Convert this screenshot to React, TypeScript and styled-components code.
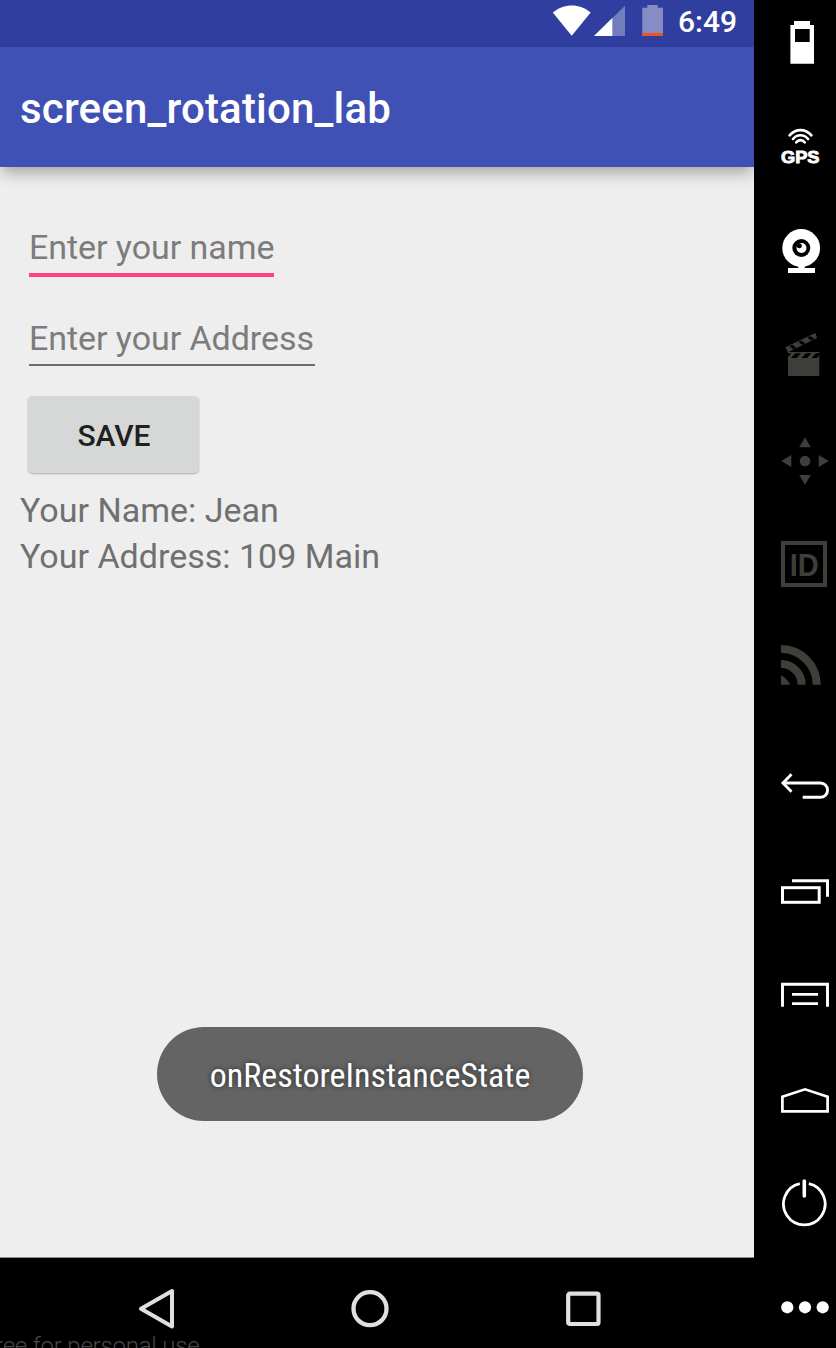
import React from "react";
import styled, { createGlobalStyle } from "styled-components";

const GlobalStyle = createGlobalStyle`
  * { box-sizing: border-box; }
  html, body { margin: 0; padding: 0; background: #000; }
  body { font-family: Roboto, "Liberation Sans", sans-serif; overflow: hidden; }
  svg { display: block; flex: none; }
`;

const Emulator = styled.div`
  display: flex;
  width: 836px;
  height: 1348px;
  background: #000;
  overflow: hidden;
`;

const Device = styled.main`
  position: relative;
  display: flex;
  flex-direction: column;
  width: 754px;
  height: 1348px;
  overflow: hidden;
`;

const StatusBar = styled.header`
  display: flex;
  align-items: flex-start;
  justify-content: flex-end;
  height: 47px;
  padding: 5px 17px 0 0;
  background: #303f9f;
  color: #fff;
`;

const Clock = styled.span`
  width: 59px;
  margin-left: 14px;
  font-size: 30px;
  line-height: 34px;
  font-weight: 500;
  white-space: nowrap;
`;

const AppBar = styled.div`
  position: relative;
  z-index: 1;
  display: flex;
  align-items: center;
  height: 120px;
  padding: 4px 0 0 20px;
  background: #3f51b5;
  box-shadow: 0 8px 14px -2px rgba(0, 0, 0, 0.31);
`;

const Title = styled.h1`
  margin: 0;
  font-size: 42px;
  line-height: 50px;
  font-weight: 500;
  letter-spacing: 0.18px;
  color: #fff;
`;

const Content = styled.section`
  display: flex;
  flex-direction: column;
  align-items: flex-start;
  height: 1091px;
  padding: 59px 20px 0;
  background: #eeeeee;
  border-bottom: 1px solid #8b8b8b;
`;

const Field = styled.input<{ $width: number; $focused?: boolean }>`
  width: ${(p) => p.$width}px;
  height: ${(p) => (p.$focused ? 51 : 49)}px;
  margin: 0 0 ${(p) => (p.$focused ? 40 : 30)}px 9px;
  padding: 0 0 5px;
  border: 0;
  border-bottom: ${(p) => (p.$focused ? "4px solid #ff4081" : "2px solid #6d6d6d")};
  border-radius: 0;
  outline: none;
  background: transparent;
  font: 400 34px/42px Roboto, sans-serif;
  letter-spacing: -0.06px;
  &::placeholder {
    color: #7c7c7c;
    opacity: 1;
  }
`;

const SaveButton = styled.button`
  width: 171px;
  height: 77px;
  margin: 0 0 14px 8px;
  padding: 2px 0 0 1px;
  border: 0;
  border-radius: 5px;
  background: #d6d8d7;
  box-shadow: 0 1px 2px rgba(0, 0, 0, 0.28);
  color: #1f2020;
  font: 500 30px/36px Roboto, sans-serif;
`;

const Result = styled.p`
  margin: 0;
  height: 46px;
  font-size: 34px;
  line-height: 46px;
  color: #707070;
  white-space: nowrap;
`;

const Toast = styled.div`
  position: absolute;
  left: 157px;
  top: 1027px;
  display: flex;
  align-items: center;
  justify-content: center;
  width: 426px;
  height: 94px;
  padding-top: 1px;
  border-radius: 47px;
  background: #646464;
`;

const ToastText = styled.span`
  font-family: "Roboto Condensed", Roboto, sans-serif;
  font-size: 34px;
  line-height: 40px;
  color: #fff;
  text-shadow: 0 0 5px rgba(0, 0, 0, 0.6);
  white-space: nowrap;
`;

const NavBar = styled.nav`
  display: flex;
  align-items: center;
  justify-content: space-between;
  height: 90px;
  padding: 11px 151px 0 137px;
  background: #000;
`;

const Watermark = styled.span`
  position: absolute;
  left: -5px;
  top: 1331px;
  font-size: 24px;
  line-height: 30px;
  font-weight: 300;
  letter-spacing: -0.2px;
  color: #484848;
  white-space: nowrap;
`;

const Sidebar = styled.aside`
  display: flex;
  flex-direction: column;
  gap: 65px;
  width: 82px;
  padding: 14px 0 0 26px;
  background: #000;
`;

const ToolGroup = styled.div`
  display: flex;
  flex-direction: column;
  gap: 48px;
`;

const ToolButton = styled.div<{ $dim?: boolean }>`
  width: 56px;
  height: 56px;
  color: ${(p) => (p.$dim ? "#3e3e3a" : "#fff")};
`;

const Tool = ({ dim, children }: { dim?: boolean; children: React.ReactNode }) => (
  <ToolButton $dim={dim}>
    <svg width="56" height="56" viewBox="0 0 56 56" fill="none" stroke="none">
      {children}
    </svg>
  </ToolButton>
);

const StatusIcons = () => (
  <svg width="112" height="32" viewBox="0 0 112 32">
    <path d="M0.8 7.6C12-2 27.500-2 38.700 7.600L19.700 30.800Z" fill="#fff" />
    <path d="M73 0.700V31H42Z" fill="#737dbd" />
    <path d="M60.300 13V31H42Z" fill="#fff" />
    <path d="M95.300 0H105.700V2.700H111V31H90.300V2.700H95.300Z" fill="#868dc6" />
    <path d="M90.300 28H111V31H90.300Z" fill="#f4511e" />
  </svg>
);

export default function App() {
  return (
    <>
      <GlobalStyle />
      <Emulator>
        <Device>
          <StatusBar>
            <StatusIcons />
            <Clock>6:49</Clock>
          </StatusBar>
          <AppBar>
            <Title>screen_rotation_lab</Title>
          </AppBar>
          <Content>
            <Field $width={245} $focused placeholder="Enter your name" />
            <Field $width={286} placeholder="Enter your Address" />
            <SaveButton>SAVE</SaveButton>
            <Result>Your Name: Jean</Result>
            <Result>Your Address: 109 Main</Result>
          </Content>
          <NavBar>
            <svg width="40" height="44" viewBox="0 0 40 44" fill="none" stroke="#e0e0e0" strokeWidth="4" strokeLinejoin="round">
              <path d="M4 21.700L35 4V39.500Z" />
            </svg>
            <svg width="40" height="40" viewBox="0 0 40 40" fill="none" stroke="#e0e0e0" strokeWidth="4.300">
              <circle cx="20" cy="19.700" r="16.500" />
            </svg>
            <svg width="40" height="40" viewBox="0 0 40 40" fill="none" stroke="#e0e0e0" strokeWidth="4.200">
              <rect x="5.200" y="4.700" width="30.300" height="30.300" rx="1.500" />
            </svg>
          </NavBar>
          <Toast>
            <ToastText>onRestoreInstanceState</ToastText>
          </Toast>
          <Watermark>ree for personal use</Watermark>
        </Device>
        <Sidebar>
          <ToolGroup>
            <Tool>
              <path fill="currentColor" fillRule="evenodd" d="M14 7H30V11H34V49.700H10.400V11H14ZM15 15V28H29.700V15Z" />
            </Tool>
            <Tool>
              <g stroke="currentColor" strokeWidth="2.700" strokeLinecap="round">
                <path d="M9.600 17.300C15.500 10.300 25.500 10.300 31.400 17.300" />
                <path d="M13 21C17 16 24 16 28 21" />
                <path d="M16.300 24.300C18.500 21.300 22.500 21.300 24.700 24.300" />
              </g>
              <text x="1" y="44.700" textLength="38.500" lengthAdjust="spacingAndGlyphs" fontFamily="Liberation Sans, sans-serif" fontWeight="700" fontSize="17" fill="currentColor" stroke="currentColor" strokeWidth="0.900">GPS</text>
            </Tool>
            <Tool>
              <circle cx="21.200" cy="26" r="18.900" fill="currentColor" />
              <path d="M17.300 43H25.700L24.500 46H35V51H8V46H18.500Z" fill="currentColor" />
              <circle cx="21.300" cy="26" r="9" fill="#000" />
              <circle cx="21.500" cy="26" r="5" fill="currentColor" />
              <circle cx="19.300" cy="23.800" r="2.500" fill="#000" />
            </Tool>
            <Tool dim>
              <path d="M8 26H39.300V50H8Z" fill="currentColor" />
              <path d="M5.300 21.300L35.300 7L37 12L8 26.300Z" fill="currentColor" />
              <path fill="#000" d="M8 27.300H11.500L8 31ZM15.500 27.300H21L16.500 32H11ZM26 27.300H31.500L27 32H21.500ZM36 27.300H39.300V29L37 32H31.500ZM9.300 20.200L12.300 18.700L16.300 21.700L13.300 23.200ZM18.300 15.900L21.300 14.400L25.300 17.400L22.300 18.900ZM27.300 11.600L30.300 10.100L34.300 13L31.300 14.500Z" />
            </Tool>
            <Tool dim>
              <circle cx="25" cy="31" r="5.300" fill="currentColor" />
              <path fill="currentColor" d="M25 7.300L30.800 17.300H19.200ZM25 54.700L30.800 45H19.200ZM1.300 31L11.300 25V37ZM48.700 31L38.700 25V37Z" />
            </Tool>
            <Tool dim>
              <rect x="3" y="9" width="42" height="42" stroke="currentColor" strokeWidth="4" />
              <text x="9.700" y="42" textLength="29" lengthAdjust="spacingAndGlyphs" fontFamily="Liberation Sans, sans-serif" fontWeight="700" fontSize="32" fill="currentColor">ID</text>
            </Tool>
            <Tool dim>
              <g stroke="currentColor" strokeWidth="8">
                <path d="M1 11A35.700 35.700 0 0 1 36.700 46.700" />
                <path d="M1 26A20.700 20.700 0 0 1 21.700 46.700" />
              </g>
              <path d="M1 37.400Q6.500 39.500 10.300 46.700H1Z" fill="currentColor" />
            </Tool>
          </ToolGroup>
          <ToolGroup>
            <Tool>
              <g stroke="currentColor" strokeWidth="2.900">
                <path d="M11.500 15.300L3 24L11.500 32.700" />
                <path d="M3 24H40.400A7.100 7.100 0 0 1 40.400 38.300H22.700" />
              </g>
            </Tool>
            <Tool>
              <g stroke="currentColor" strokeWidth="3">
                <rect x="2.500" y="24.700" width="36.700" height="14.600" />
                <path d="M12 17.700H47.500V33.700" />
              </g>
            </Tool>
            <Tool>
              <g stroke="currentColor" strokeWidth="2.900">
                <path d="M2.500 39.700V17.200H47.500V39.700" />
                <path d="M12 27.400H38M12 36.600H38" />
              </g>
            </Tool>
            <Tool>
              <path stroke="currentColor" strokeWidth="2.700" d="M2.400 40.300V25.800L25 18.300L47.600 25.800V40.300Z" />
            </Tool>
            <Tool>
              <g stroke="currentColor" strokeWidth="2.800">
                <path d="M19.800 8.700A20.800 20.800 0 1 0 28.800 8.700" />
                <path d="M24.300 6V21" strokeWidth="3.600" strokeLinecap="round" />
              </g>
            </Tool>
            <Tool>
              <g fill="currentColor">
                <circle cx="7.300" cy="28.300" r="6.100" />
                <circle cx="25" cy="28.300" r="6.100" />
                <circle cx="42.700" cy="28.300" r="6.100" />
              </g>
            </Tool>
          </ToolGroup>
        </Sidebar>
      </Emulator>
    </>
  );
}
